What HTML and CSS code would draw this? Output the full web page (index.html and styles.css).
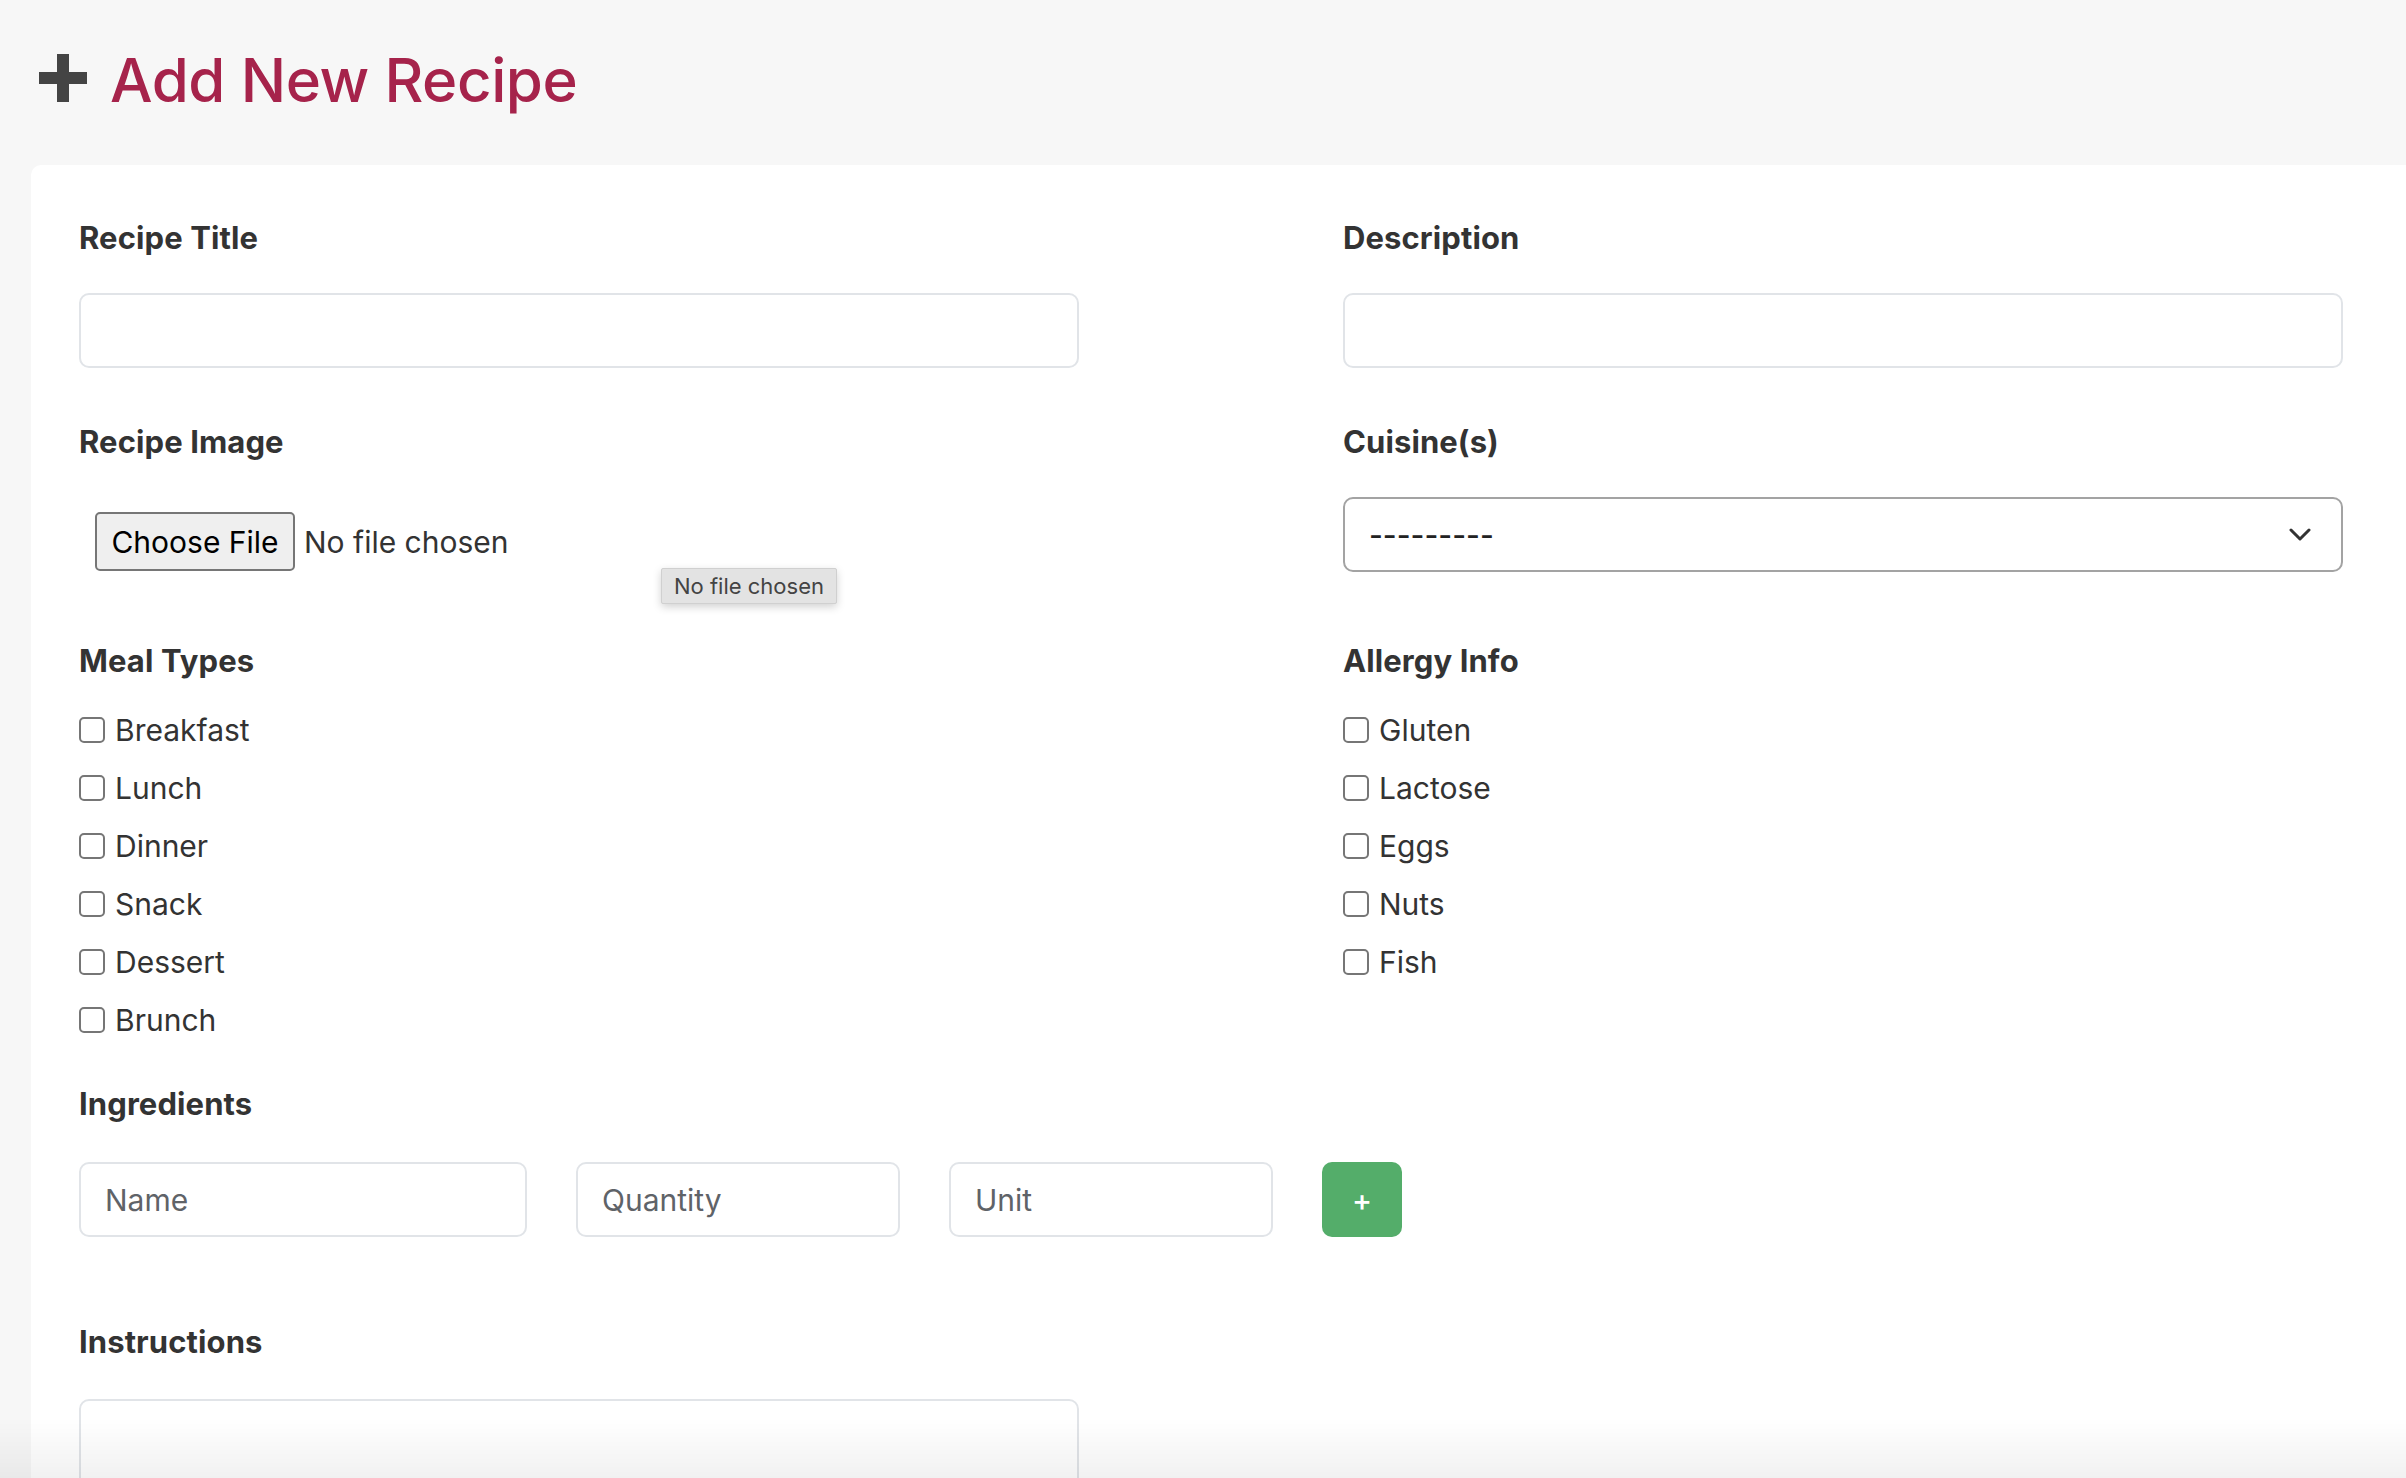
FILE: index.html
```html
<!DOCTYPE html>
<html lang="en">
<head>
<meta charset="utf-8">
<title>Add New Recipe</title>
<link rel="stylesheet" href="styles.css">
</head>
<body>
<header class="page-header">
  <svg class="plus-icon" viewBox="0 0 48 48" width="48" height="48" aria-hidden="true">
    <rect x="18" y="0" width="12" height="48" fill="#444"/>
    <rect x="0" y="18" width="48" height="12" fill="#444"/>
  </svg>
  <h1 class="page-title">Add New Recipe</h1>
</header>

<main class="card">
  <div class="grid">
    <div class="field">
      <label class="field-label">Recipe Title</label>
      <input class="text-input" type="text">
    </div>
    <div class="field">
      <label class="field-label">Description</label>
      <input class="text-input" type="text">
    </div>

    <div class="field">
      <label class="field-label">Recipe Image</label>
      <div class="file-field">
        <span class="file-btn">Choose File</span>
        <span class="file-name">No file chosen</span>
        <span class="tooltip">No file chosen</span>
      </div>
    </div>
    <div class="field">
      <label class="field-label">Cuisine(s)</label>
      <div class="select">
        <span class="select-value">---------</span>
        <svg class="chevron" viewBox="0 0 22 14" width="22" height="14" aria-hidden="true">
          <path d="M2 2 L11 11 L20 2" fill="none" stroke="#333" stroke-width="3" stroke-linecap="round" stroke-linejoin="round"/>
        </svg>
      </div>
    </div>

    <div class="field">
      <label class="field-label">Meal Types</label>
      <div class="checks">
        <label class="check"><input type="checkbox"><span>Breakfast</span></label>
        <label class="check"><input type="checkbox"><span>Lunch</span></label>
        <label class="check"><input type="checkbox"><span>Dinner</span></label>
        <label class="check"><input type="checkbox"><span>Snack</span></label>
        <label class="check"><input type="checkbox"><span>Dessert</span></label>
        <label class="check"><input type="checkbox"><span>Brunch</span></label>
      </div>
    </div>
    <div class="field">
      <label class="field-label">Allergy Info</label>
      <div class="checks">
        <label class="check"><input type="checkbox"><span>Gluten</span></label>
        <label class="check"><input type="checkbox"><span>Lactose</span></label>
        <label class="check"><input type="checkbox"><span>Eggs</span></label>
        <label class="check"><input type="checkbox"><span>Nuts</span></label>
        <label class="check"><input type="checkbox"><span>Fish</span></label>
      </div>
    </div>
  </div>

  <section class="section ingredients">
    <label class="field-label">Ingredients</label>
    <div class="ingredient-row">
      <input class="text-input ing-name" type="text" placeholder="Name">
      <input class="text-input ing-qty" type="text" placeholder="Quantity">
      <input class="text-input ing-unit" type="text" placeholder="Unit">
      <button class="add-btn" type="button">+</button>
    </div>
  </section>

  <section class="section instructions">
    <label class="field-label">Instructions</label>
    <textarea class="text-input textarea"></textarea>
  </section>
</main>

<div class="bottom-fade"></div>
</body>
</html>
```

FILE: styles.css
```css
* {
  box-sizing: border-box;
}

html, body {
  margin: 0;
  padding: 0;
  overflow: hidden;
  height: 100%;
}

body {
  background: #f7f7f7;
  font-family: Inter, "Noto Sans", "Liberation Sans", sans-serif;
  color: #333;
}

.page-header {
  display: flex;
  align-items: flex-start;
  padding: 48px 0 0 39px;
}

.plus-icon {
  flex: none;
  margin-top: 6px;
  margin-right: 23px;
}

.page-title {
  margin: 0;
  font-size: 60px;
  line-height: 64px;
  font-weight: 500;
  color: #a6234b;
  letter-spacing: -0.4px;
}

.card {
  margin: 53px 0 0 31px;
  background: #fff;
  border-radius: 10px 0 0 0;
  padding: 55px 0 0 48px;
  min-height: 1400px;
}

.grid {
  display: grid;
  grid-template-columns: 1264px 1fr;
  row-gap: 56px;
}

.field {
  display: flex;
  flex-direction: column;
  align-items: flex-start;
}

.field-label {
  display: block;
  font-size: 31px;
  line-height: 36px;
  font-weight: 700;
  color: #333;
  letter-spacing: 0.1px;
}

.text-input {
  display: block;
  width: 1000px;
  height: 75px;
  margin-top: 37px;
  border: 2px solid #e1e4e8;
  border-radius: 10px;
  background: #fff;
  font-family: inherit;
  font-size: 30px;
  padding: 0 24px;
  color: #333;
  outline: none;
}

.text-input::placeholder {
  color: #5f6368;
}

.file-field {
  position: relative;
  display: flex;
  align-items: center;
  margin-top: 36px;
  padding: 16px 0 16px 16px;
}

.file-btn {
  display: inline-flex;
  align-items: center;
  justify-content: center;
  width: 200px;
  height: 59px;
  background: #efefef;
  border: 2px solid #767676;
  border-radius: 5px;
  font-size: 30px;
  color: #000;
}

.file-name {
  margin-left: 9px;
  font-size: 30px;
  color: #333;
}

.tooltip {
  position: absolute;
  left: 582px;
  top: 72px;
  padding: 0 12px;
  height: 36px;
  line-height: 34px;
  background: #e3e3e3;
  border: 1px solid #d0d0d0;
  border-radius: 2px;
  box-shadow: 0 3px 8px rgba(0, 0, 0, 0.18);
  font-size: 22px;
  color: #444;
  white-space: nowrap;
}

.select {
  display: flex;
  align-items: center;
  justify-content: space-between;
  width: 1000px;
  height: 75px;
  margin-top: 37px;
  padding: 0 30px 0 24px;
  border: 2px solid #a3a3a3;
  border-radius: 10px;
  background: #fff;
}

.select-value {
  font-size: 30px;
  color: #222;
  font-weight: 500;
}

.chevron {
  display: block;
}

.checks {
  display: flex;
  flex-direction: column;
  gap: 20px;
  margin-top: 32px;
}

.check {
  display: flex;
  align-items: center;
  height: 38px;
  font-size: 30px;
  color: #333;
}

.check input {
  appearance: none;
  -webkit-appearance: none;
  flex: none;
  width: 26px;
  height: 26px;
  margin: 0 10px 0 0;
  border: 2px solid #767676;
  border-radius: 5px;
  background: #fff;
}

.section {
  display: flex;
  flex-direction: column;
  align-items: flex-start;
}

.ingredients {
  margin-top: 47px;
}

.ingredient-row {
  display: flex;
  align-items: stretch;
  gap: 49px;
  margin-top: 40px;
}

.ingredient-row .text-input {
  margin-top: 0;
}

.ing-name {
  width: 448px !important;
}

.ing-qty,
.ing-unit {
  width: 324px !important;
}

.add-btn {
  width: 80px;
  height: 75px;
  border: none;
  border-radius: 10px;
  background: #54ad6a;
  color: #fff;
  font-family: inherit;
  font-size: 30px;
  font-weight: 500;
  padding: 0;
}

.instructions {
  margin-top: 87px;
}

.textarea {
  margin-top: 39px;
  height: 200px;
  resize: none;
}

.bottom-fade {
  position: fixed;
  left: 0;
  right: 0;
  bottom: 0;
  height: 60px;
  background: linear-gradient(to bottom, rgba(0, 0, 0, 0), rgba(0, 0, 0, 0.055));
  pointer-events: none;
}
```
